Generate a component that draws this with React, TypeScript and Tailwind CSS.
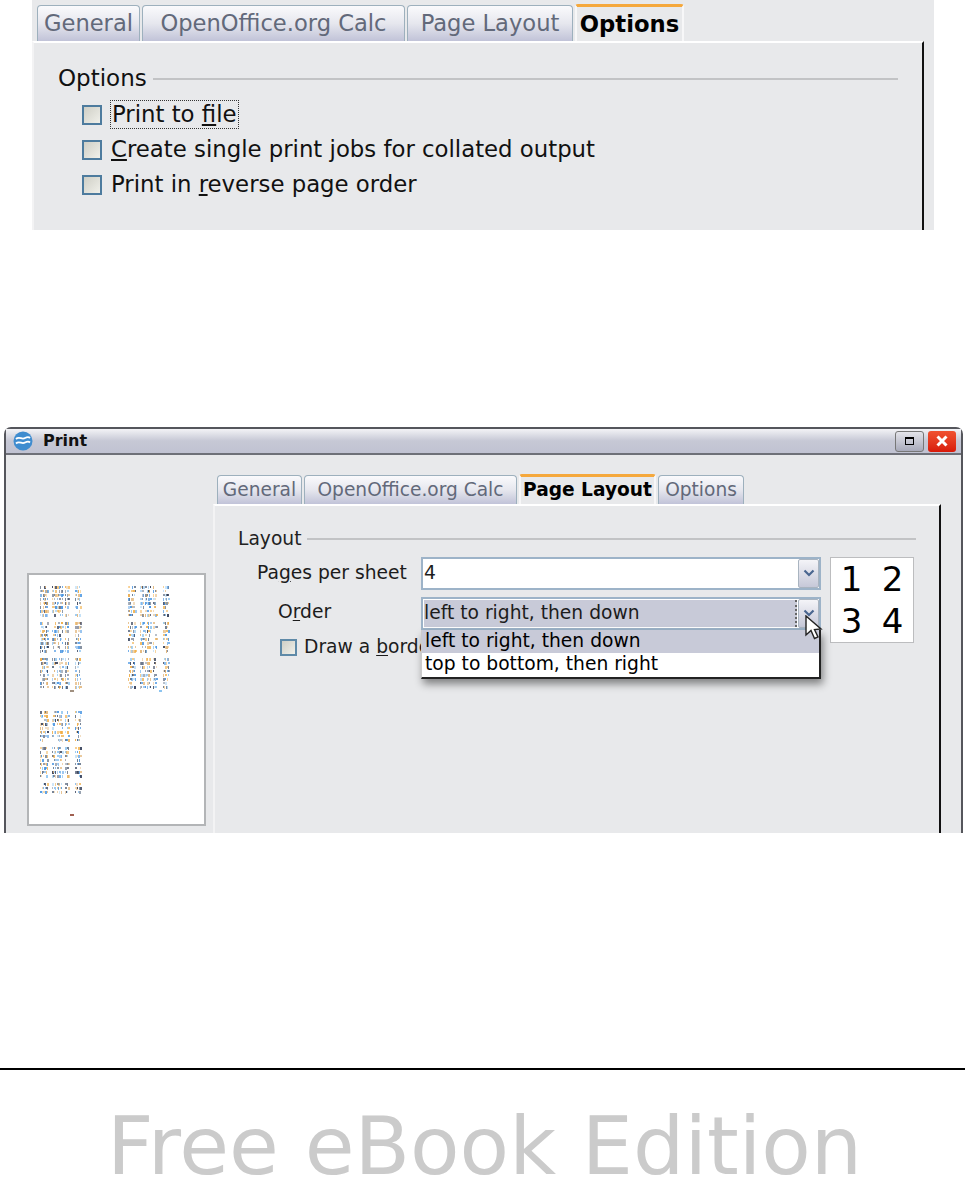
import React from "react";

const font = "font-['DejaVu_Sans',sans-serif]";

function Check({ big }: { big?: boolean }) {
  return (
    <span
      className={
        big
          ? "block w-[20px] h-[20px] shrink-0 border-2 border-[#4d7b9e] bg-linear-to-br from-[#cfcfc6] to-[#f0f0ea]"
          : "block w-[17px] h-[17px] shrink-0 border-2 border-[#5f8aa8] bg-linear-to-br from-[#cfcfc6] to-[#f0f0ea]"
      }
    />
  );
}

function Tab({ label, cls, active, big }: { label: string; cls: string; active?: boolean; big?: boolean }) {
  if (active) {
    return (
      <div
        className={`${cls} flex items-center justify-center rounded-t-[3px] border-t-[3px] border-t-[#f5a83c] border-x-2 border-x-[#f7f7f8] font-bold text-black bg-[#e8e9eb] ${
          big ? "text-[22.7px] leading-none" : "text-[18.6px] leading-none"
        }`}
      >
        {label}
      </div>
    );
  }
  return (
    <div
      className={`${cls} flex items-center justify-center rounded-t-[4px] border border-b-0 border-[#9db0bd] bg-linear-to-b from-[#fafafc] via-[#e6e7ee] to-[#c1c3d8] text-[#62697a] ${
        big ? "text-[22.6px] leading-none" : "text-[18.6px] leading-none"
      }`}
    >
      {label}
    </div>
  );
}

function Heading({ label, big }: { label: string; big?: boolean }) {
  return (
    <div className={big ? "flex items-center gap-[6px] text-[23px] leading-none text-[#111]" : "flex items-center gap-[5px] text-[18.7px] leading-none text-[#222]"}>
      <span>{label}</span>
      <span className="flex-1 h-[2px] bg-[#c2c3c5]" />
    </div>
  );
}

function Chevron() {
  return (
    <svg width="12" height="8" viewBox="0 0 12 8" fill="none">
      <path d="M1.5 1.5 L6 6 L10.5 1.5" stroke="#4a6690" strokeWidth="2.2" />
    </svg>
  );
}

function Combo({ text, selected }: { text: string; selected?: boolean }) {
  return (
    <div className="w-[400px] h-[33px] shrink-0 border-2 border-[#9db3c8] bg-white flex items-stretch">
      <div className={`flex-1 flex items-center m-[1px] mr-0 ${selected ? "bg-[#c8cad8] border-r-2 border-dotted border-r-[#666]" : ""}`}>
        {text}
      </div>
      <div className="w-[21px] ml-[1px] border border-[#a9b4c0] rounded-[2px] bg-linear-to-b from-[#f4f4f8] to-[#c6c8d8] flex items-center justify-center">
        <Chevron />
      </div>
    </div>
  );
}

function Thumb() {
  let seed = 12345;
  const rnd = () => {
    seed = (seed * 1103515245 + 12345) & 0x7fffffff;
    return seed / 0x7fffffff;
  };
  const colors = ["#3f8fe0", "#f0a93c", "#2a3550", "#8cc4f0", "#e0b070", "#5a6a80"];
  const rects: React.ReactNode[] = [];
  const page = (ox: number, y0: number, y1: number, key: string) => {
    const cols = [
      [0, 8],
      [12, 4],
      [17, 6],
      [25, 4],
      [35, 6],
    ];
    for (let y = y0; y < y1; y += 4) {
      if ((y - y0) % 36 > 31) continue;
      cols.forEach(([cx, w], ci) => {
        for (let i = 0; i < w; i += 1 + Math.floor(rnd() * 2)) {
          if (rnd() < 0.2) continue;
          rects.push(
            <rect
              key={`${key}-${y}-${ci}-${i}`}
              x={ox + cx + i}
              y={y}
              width={1 + Math.floor(rnd() * 2)}
              height={2 + Math.floor(rnd() * 2)}
              fill={colors[Math.floor(rnd() * colors.length)]}
              opacity={0.4 + rnd() * 0.5}
            />
          );
        }
      });
    }
  };
  page(11, 11, 112, "a");
  page(99, 11, 112, "b");
  page(11, 136, 217, "c");
  return (
    <svg className="blur-[0.6px]" width="175" height="249" viewBox="0 0 175 249">
      {rects}
      <rect x="41" y="115" width="4" height="2" fill="#a09080" />
      <rect x="130" y="115" width="3" height="2" fill="#8cc4f0" />
      <rect x="41" y="239" width="4" height="2" fill="#a06050" />
    </svg>
  );
}

export default function App() {
  return (
    <div className={`w-[965px] h-[1179px] bg-white overflow-hidden ${font}`}>
      {/* Top panel */}
      <div className="ml-[32px] w-[902px] h-[230px] bg-[#e8e9eb] flex flex-col">
        <div className="h-[41px] pl-[5px] flex items-end gap-[2px]">
          <Tab big label="General" cls="w-[103px] h-[36px]" />
          <Tab big label="OpenOffice.org Calc" cls="w-[263px] h-[36px]" />
          <Tab big label="Page Layout" cls="w-[166px] h-[36px]" />
          <Tab big active label="Options" cls="w-[109px] h-[37px]" />
        </div>
        <div className="w-[892px] flex-1 border-t-2 border-t-white border-l-2 border-l-[#f3f3f4] border-r-2 border-r-[#111] pl-[24px] pr-[24px] pt-[24px]">
          <Heading big label="Options" />
          <div className="pl-[24px] pt-[14px] flex flex-col gap-[14px] text-[22.8px] leading-none text-[#111]">
            <div className="flex items-center gap-[8px] h-[21px]">
              <Check big />
              <span className="border border-dotted border-[#333] px-[1px] py-[2px]">
                Print to <span className="underline underline-offset-2">f</span>ile
              </span>
            </div>
            <div className="flex items-center gap-[9px] h-[21px]">
              <Check big />
              <span>
                <span className="underline underline-offset-2">C</span>reate single print jobs for collated output
              </span>
            </div>
            <div className="flex items-center gap-[9px] h-[21px]">
              <Check big />
              <span>
                Print in <span className="underline underline-offset-2">r</span>everse page order
              </span>
            </div>
          </div>
        </div>
      </div>

      {/* Print dialog */}
      <div className="relative mt-[197px] ml-[4px] w-[959px] h-[406px] bg-[#e8e9eb] border-x-2 border-t-2 border-[#55565c] rounded-t-[7px] flex flex-col">
        <div className="h-[26px] shrink-0 bg-linear-to-b from-[#f3f3f6] via-[#c6c8d5] to-[#c0c2d2] border-b-2 border-b-[#6e7078] flex items-center pl-[7px] pr-[5px]">
          <svg width="20" height="20" viewBox="0 0 20 20">
            <circle cx="10" cy="10" r="9.5" fill="#3f8ccf" />
            <path d="M3 8 C6 5 9 9 12 7 C14 6 16 6 17 7 M3 12.5 C6 9.5 9 13.5 12 11.5 C14 10.5 16 10.5 17 11.5" stroke="#fff" strokeWidth="1.8" fill="none" />
          </svg>
          <span className="ml-[10px] text-[16px] font-bold text-[#111]">Print</span>
          <div className="ml-auto flex gap-[4px]">
            <div className="w-[29px] h-[21px] rounded-[3px] border border-[#777] bg-linear-to-b from-[#e4e4ea] to-[#a8aaba] flex items-center justify-center">
              <span className="block w-[9px] h-[8px] border border-t-2 border-black" />
            </div>
            <div className="w-[28px] h-[21px] rounded-[3px] bg-linear-to-b from-[#f05030] to-[#d81808] flex items-center justify-center">
              <svg width="12" height="12" viewBox="0 0 12 12">
                <path d="M1.5 1.5 L10.5 10.5 M10.5 1.5 L1.5 10.5" stroke="#fff" strokeWidth="3" />
              </svg>
            </div>
          </div>
        </div>

        <div className="flex-1 flex min-h-0">
          <div className="w-[207px] shrink-0 pl-[21px] pt-[118px]">
            <div className="w-[179px] h-[253px] bg-white border-2 border-[#b3b5b7]">
              <Thumb />
            </div>
          </div>
          <div className="flex-1 flex flex-col min-w-0">
            <div className="h-[49px] shrink-0 pl-[4px] flex items-end gap-[2px]">
              <Tab label="General" cls="w-[85px] h-[29px]" />
              <Tab label="OpenOffice.org Calc" cls="w-[213px] h-[29px]" />
              <Tab active label="Page Layout" cls="w-[137px] h-[30px]" />
              <Tab label="Options" cls="w-[86px] h-[29px]" />
            </div>
            <div className="relative w-[728px] flex-1 border-t-2 border-t-white border-l-2 border-l-[#f3f3f4] border-r-2 border-r-[#111] pl-[23px] pr-[23px] pt-[24px] text-[18.7px] leading-none text-[#1c1c1c]">
              <Heading label="Layout" />
              <div className="flex pt-[8px] gap-[9px]">
                <div className="flex flex-col gap-[7px]">
                  <div className="flex items-center">
                    <span className="w-[183px] pl-[19px]">
                      Pa<span className="underline underline-offset-2">g</span>es per sheet
                    </span>
                    <Combo text="4" />
                  </div>
                  <div className="flex items-center">
                    <span className="w-[183px] pl-[40px] -translate-y-px">
                      O<span className="underline underline-offset-2">r</span>der
                    </span>
                    <Combo selected text="left to right, then down" />
                  </div>
                  <div className="flex items-center gap-[7px] pl-[42px] pt-[1px]">
                    <Check />
                    <span>
                      Draw a <span className="underline underline-offset-2">b</span>order
                    </span>
                  </div>
                </div>
                <div className="w-[84px] h-[86px] bg-white border border-[#bcbdbf] grid grid-cols-2 place-items-center text-black text-[34px] leading-none">
                  <span>1</span>
                  <span>2</span>
                  <span>3</span>
                  <span>4</span>
                </div>
              </div>
              {/* Dropdown list overlay */}
              <div className="absolute left-[206px] top-[124px] w-[400px] h-[49px] bg-white border-l border-l-[#ccc] border-b-2 border-b-[#222] border-r-2 border-r-[#222] shadow-[2px_5px_8px_rgba(0,0,0,0.45)] text-black">
                <div className="h-[23px] bg-[#c8cad8] flex items-center pl-[3px]">left to right, then down</div>
                <div className="h-[24px] flex items-center pl-[3px] pb-[2px]">top to bottom, then right</div>
              </div>
              {/* Mouse cursor */}
              <svg className="absolute left-[590px] top-[109px]" width="20" height="26" viewBox="0 0 20 26">
                <path d="M1 1 L1 20 L6 15.5 L9.5 23.5 L13 22 L9.5 14.5 L16 14 Z" fill="#fff" stroke="#222" strokeWidth="1.4" />
              </svg>
            </div>
          </div>
        </div>
      </div>

      {/* Footer */}
      <div className="mt-[235px] h-[2px] bg-black" />
      <div className="pt-[36px] pl-[107px] text-[81px] leading-[81px] h-[109px] text-[#cbcbcb] whitespace-nowrap">Free eBook Edition</div>
    </div>
  );
}
